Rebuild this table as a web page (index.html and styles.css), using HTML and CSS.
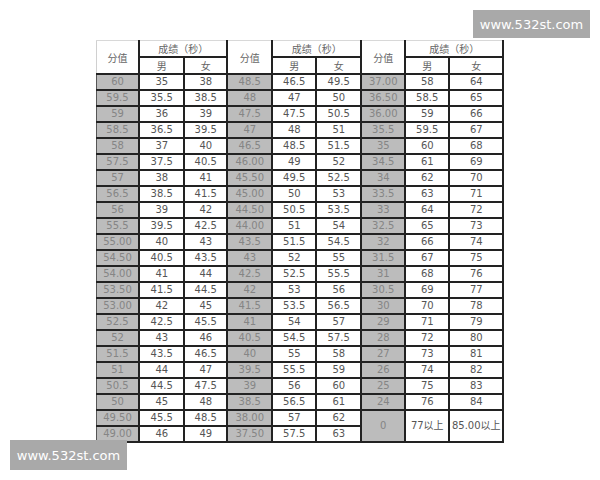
FILE: index.html
```html
<!DOCTYPE html>
<html lang="zh">
<head>
<meta charset="utf-8">
<title>分值表</title>
<link rel="stylesheet" href="styles.css">
</head>
<body>
<div class="page">
<table class="score">
<colgroup>
<col class="c1"><col class="c2"><col class="c3"><col class="c4"><col class="c5"><col class="c6"><col class="c7"><col class="c8"><col class="c9">
</colgroup>
<thead>
<tr class="h1">
<th rowspan="2" class="first">分值</th><th colspan="2">成绩（秒）</th>
<th rowspan="2">分值</th><th colspan="2">成绩（秒）</th>
<th rowspan="2">分值</th><th colspan="2">成绩（秒）</th>
</tr>
<tr class="h2">
<th>男</th><th>女</th><th>男</th><th>女</th><th>男</th><th>女</th>
</tr>
</thead>
<tbody>
<tr><td class="g">60</td><td>35</td><td>38</td><td class="g">48.5</td><td>46.5</td><td>49.5</td><td class="g">37.00</td><td>58</td><td>64</td></tr>
<tr><td class="g">59.5</td><td>35.5</td><td>38.5</td><td class="g">48</td><td>47</td><td>50</td><td class="g">36.50</td><td>58.5</td><td>65</td></tr>
<tr><td class="g">59</td><td>36</td><td>39</td><td class="g">47.5</td><td>47.5</td><td>50.5</td><td class="g">36.00</td><td>59</td><td>66</td></tr>
<tr><td class="g">58.5</td><td>36.5</td><td>39.5</td><td class="g">47</td><td>48</td><td>51</td><td class="g">35.5</td><td>59.5</td><td>67</td></tr>
<tr><td class="g">58</td><td>37</td><td>40</td><td class="g">46.5</td><td>48.5</td><td>51.5</td><td class="g">35</td><td>60</td><td>68</td></tr>
<tr><td class="g">57.5</td><td>37.5</td><td>40.5</td><td class="g">46.00</td><td>49</td><td>52</td><td class="g">34.5</td><td>61</td><td>69</td></tr>
<tr><td class="g">57</td><td>38</td><td>41</td><td class="g">45.50</td><td>49.5</td><td>52.5</td><td class="g">34</td><td>62</td><td>70</td></tr>
<tr><td class="g">56.5</td><td>38.5</td><td>41.5</td><td class="g">45.00</td><td>50</td><td>53</td><td class="g">33.5</td><td>63</td><td>71</td></tr>
<tr><td class="g">56</td><td>39</td><td>42</td><td class="g">44.50</td><td>50.5</td><td>53.5</td><td class="g">33</td><td>64</td><td>72</td></tr>
<tr><td class="g">55.5</td><td>39.5</td><td>42.5</td><td class="g">44.00</td><td>51</td><td>54</td><td class="g">32.5</td><td>65</td><td>73</td></tr>
<tr><td class="g">55.00</td><td>40</td><td>43</td><td class="g">43.5</td><td>51.5</td><td>54.5</td><td class="g">32</td><td>66</td><td>74</td></tr>
<tr><td class="g">54.50</td><td>40.5</td><td>43.5</td><td class="g">43</td><td>52</td><td>55</td><td class="g">31.5</td><td>67</td><td>75</td></tr>
<tr><td class="g">54.00</td><td>41</td><td>44</td><td class="g">42.5</td><td>52.5</td><td>55.5</td><td class="g">31</td><td>68</td><td>76</td></tr>
<tr><td class="g">53.50</td><td>41.5</td><td>44.5</td><td class="g">42</td><td>53</td><td>56</td><td class="g">30.5</td><td>69</td><td>77</td></tr>
<tr><td class="g">53.00</td><td>42</td><td>45</td><td class="g">41.5</td><td>53.5</td><td>56.5</td><td class="g">30</td><td>70</td><td>78</td></tr>
<tr><td class="g">52.5</td><td>42.5</td><td>45.5</td><td class="g">41</td><td>54</td><td>57</td><td class="g">29</td><td>71</td><td>79</td></tr>
<tr><td class="g">52</td><td>43</td><td>46</td><td class="g">40.5</td><td>54.5</td><td>57.5</td><td class="g">28</td><td>72</td><td>80</td></tr>
<tr><td class="g">51.5</td><td>43.5</td><td>46.5</td><td class="g">40</td><td>55</td><td>58</td><td class="g">27</td><td>73</td><td>81</td></tr>
<tr><td class="g">51</td><td>44</td><td>47</td><td class="g">39.5</td><td>55.5</td><td>59</td><td class="g">26</td><td>74</td><td>82</td></tr>
<tr><td class="g">50.5</td><td>44.5</td><td>47.5</td><td class="g">39</td><td>56</td><td>60</td><td class="g">25</td><td>75</td><td>83</td></tr>
<tr><td class="g">50</td><td>45</td><td>48</td><td class="g">38.5</td><td>56.5</td><td>61</td><td class="g">24</td><td>76</td><td>84</td></tr>
<tr><td class="g">49.50</td><td>45.5</td><td>48.5</td><td class="g">38.00</td><td>57</td><td>62</td><td class="g" rowspan="2">0</td><td rowspan="2">77以上</td><td rowspan="2">85.00以上</td></tr>
<tr><td class="g">49.00</td><td>46</td><td>49</td><td class="g">37.50</td><td>57.5</td><td>63</td></tr>
</tbody>
</table>
<div class="mark mark-top">www.532st.com</div>
<div class="mark mark-bottom">www.532st.com</div>
</div>
</body>
</html>
```
FILE: styles.css
```css
html, body {
  margin: 0;
  padding: 0;
  background: #ffffff;
}
.page {
  position: relative;
  width: 600px;
  height: 480px;
  padding-top: 40px;
  box-sizing: border-box;
}
.score {
  margin: 0 auto;
  width: 407px;
  table-layout: fixed;
  border-collapse: collapse;
  font-family: "DejaVu Sans", "Noto Sans CJK SC", sans-serif;
  font-size: 10px;
  color: #555;
}
.c1 { width: 43px; }
.c2 { width: 45px; }
.c3 { width: 43px; }
.c4 { width: 45px; }
.c5 { width: 44px; }
.c6 { width: 45px; }
.c7 { width: 44px; }
.c8 { width: 44px; }
.c9 { width: 54px; }
.score th, .score td {
  padding: 0;
  text-align: center;
  vertical-align: middle;
  white-space: nowrap;
  overflow: hidden;
}
.score th {
  font-weight: normal;
  color: #666;
  font-size: 10px;
  border: 2px solid #222;
  border-top: 1px solid #d8d8d8;
}
.score .h1 th { height: 13px; }
.score .h2 th { height: 14px; border-top: 2px solid #222; }
.score .first { border-left: 1px solid #d0d0d0; }
.score td {
  height: 14px;
  line-height: 14px;
  border: 2px solid #222;
}
.score td.g {
  background: #bcbcbc;
  color: #858585;
}
.score tbody tr td:first-child { border-left: 1px solid #555; }
.mark {
  position: absolute;
  background: #a9a9a9;
  color: #ffffff;
  font-family: "DejaVu Sans", sans-serif;
  font-size: 13px;
  display: flex;
  align-items: center;
  justify-content: center;
}
.mark-top {
  left: 473px;
  top: 10px;
  width: 117px;
  height: 28px;
}
.mark-bottom {
  left: 10px;
  top: 440px;
  width: 117px;
  height: 30px;
}
```
